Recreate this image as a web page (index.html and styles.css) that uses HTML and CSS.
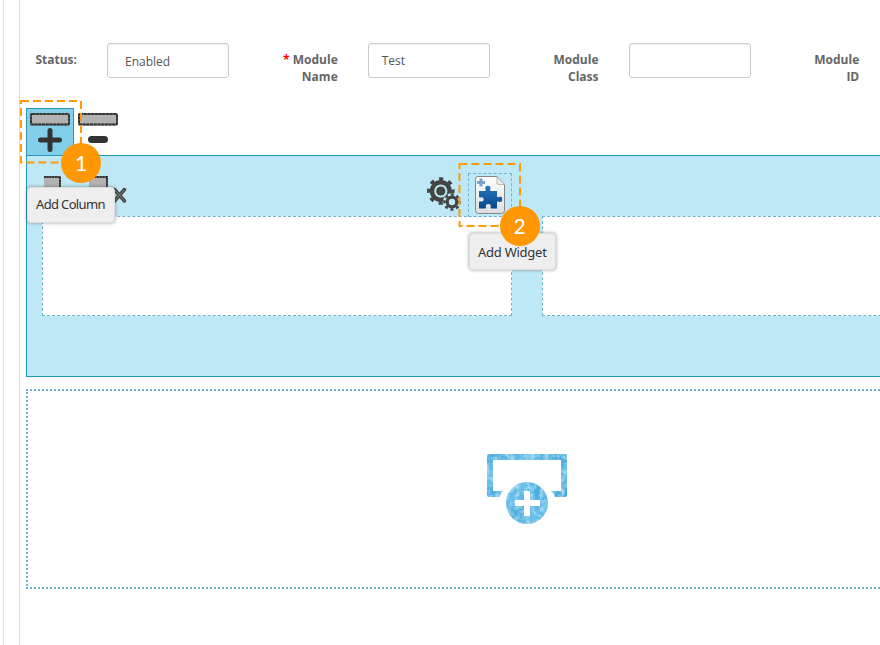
FILE: index.html
```html
<!DOCTYPE html>
<html lang="en">
<head>
<meta charset="utf-8">
<title>Module Builder</title>
<link rel="stylesheet" href="styles.css">
</head>
<body>
<div class="page">
  <div class="frame">
  <main class="panel">
    <form class="fields">
      <div class="field"><label>Status:</label><div class="input select">Enabled</div></div>
      <div class="field"><label><span class="req">*</span> Module Name</label><div class="input">Test</div></div>
      <div class="field"><label>Module Class</label><div class="input"></div></div>
      <div class="field"><label>Module ID</label></div>
    </form>

    <div class="toolbar">
      <div class="tool active">
        <svg width="46" height="46" viewBox="27 109 46 46"><rect x="31" y="114" width="38" height="10.5" rx="1" fill="#b2b2b2" stroke="#777" stroke-width="2"/><rect x="31" y="114" width="38" height="10.5" rx="1" fill="none" stroke="#333" stroke-width="2" stroke-dasharray="3 .7"/><path d="M50 130.500v19M40.500 140h19" stroke="#333" stroke-width="5" stroke-linecap="round"/></svg>
      </div>
      <div class="tool">
        <svg width="46" height="46" viewBox="75 109 46 46"><rect x="79" y="114" width="38" height="10.5" rx="1" fill="#b2b2b2" stroke="#777" stroke-width="2"/><rect x="79" y="114" width="38" height="10.5" rx="1" fill="none" stroke="#333" stroke-width="2" stroke-dasharray="3 .7"/><path d="M91.500 139.500h13" stroke="#333" stroke-width="7" stroke-linecap="round"/></svg>
      </div>
    </div>

    <section class="row">
      <div class="column">
        <header>
          <svg class="sizes" width="88" height="44" viewBox="42 172 88 44"><path d="M44 177h16v18H44zM89 177h18v18H89z" fill="#b2b2b2"/><path d="M44 177h16v18M89 177h18v18" fill="none" stroke="#777" stroke-width="2"/><path d="M44 177h16v18M89 177h18v18" fill="none" stroke="#333" stroke-width="2" stroke-dasharray="2 .7"/><path d="M114.500 189.500l10 11.500M124.500 189.500l-10 11.500" stroke="#444" stroke-width="3.500" stroke-linecap="round"/><path d="M114.500 189.500l10 11.500M124.500 189.500l-10 11.500" stroke="#888" stroke-width="1"/></svg>
          <svg class="gears" width="36" height="36" viewBox="426 176 36 36">
            <circle cx="440.800" cy="191" r="8.800" fill="none" stroke="#444" stroke-width="4.400"/>
            <circle cx="440.800" cy="191" r="12.200" fill="none" stroke="#444" stroke-width="3.200" stroke-dasharray="4.200 5.382" stroke-dashoffset="2.100"/>
            <circle cx="440.800" cy="191" r="4.600" fill="#444"/>
            <circle cx="452" cy="202" r="9" fill="#bee8f5"/>
            <circle cx="452" cy="202" r="4.800" fill="none" stroke="#444" stroke-width="3.200"/>
            <circle cx="452" cy="202" r="7.500" fill="none" stroke="#444" stroke-width="2.600" stroke-dasharray="3 2.890" stroke-dashoffset="1.500"/>
          </svg>
          <div class="add-widget">
            <svg width="42" height="42" viewBox="469 174 42 42">
              <defs><linearGradient id="sheet" x2="0" y2="1"><stop stop-color="#fff"/><stop offset="1" stop-color="#dedede"/></linearGradient><linearGradient id="puzzle" x2="0" y2="1"><stop stop-color="#2479bb"/><stop offset="1" stop-color="#07478c"/></linearGradient></defs>
              <path d="M478 176.500h19l7.500 8v26q0 3-3 3h-23q-3 0-3-3v-31q0-3 2.500-3z" fill="url(#sheet)" stroke="#858585"/>
              <path d="M497 176.500q0 7 0 7.500 3 1 7.500.500z" fill="#ececec" stroke="#aaa" stroke-width=".8"/>
              <path d="M481 178.500v8M477 182.500h8" stroke="#7ba1d0" stroke-width="3"/>
              <path d="M479 191h6.200q1-.700.300-1.700-1-3.500 2.400-3.500t2.300 3.500q-.600 1 .4 1.700h6.400v5.500q.700 1.200 1.800.500 3-1.500 3.400 2 .1 3.700-3.200 2.700-1.200-1-2 .3v6.500h-6q-.800-.700-.3-1.600.600-3-2.300-3t-2.500 2.800q.500 1-.5 1.800H479v-6.500q.600-1 1.700-.600 3 .700 3-2t-3-2q-1.200.500-1.700-.6z" fill="url(#puzzle)"/>
            </svg>
          </div>
        </header>
        <div class="drop"></div>
      </div>
      <div class="column">
        <header></header>
        <div class="drop"></div>
      </div>
    </section>

    <section class="add-row">
      <svg width="82" height="72" viewBox="486 453 82 72">
        <defs>
          <linearGradient id="wash" x2="1" y2="1"><stop stop-color="#45abdf"/><stop offset=".3" stop-color="#66bee8"/><stop offset=".5" stop-color="#48ace0"/><stop offset=".75" stop-color="#66bee8"/><stop offset="1" stop-color="#369dd6"/></linearGradient>
          <filter id="grain" x="0" y="0" width="1" height="1" color-interpolation-filters="sRGB"><feTurbulence type="fractalNoise" baseFrequency=".2" numOctaves="3" seed="4"/><feColorMatrix values="0 0 0 0 1  0 0 0 0 1  0 0 0 0 1  1.300 0 0 0 -.500"/><feComposite in2="SourceGraphic" operator="in"/><feMerge><feMergeNode in="SourceGraphic"/><feMergeNode/></feMerge></filter>
        </defs>
        <g filter="url(#grain)">
          <path fill-rule="evenodd" d="M489 454h76q2 0 2 2v39q0 2-2 2h-10q-1-4-4-6h10v-31h-68v31h9.500q-2.500 3-3 6H489q-2 0-2-2v-39q0-2 2-2z" fill="url(#wash)"/>
          <path fill-rule="evenodd" d="M527 482a21 21 0 1 1 0 42 21 21 0 0 1 0-42zM524 491v9h-9v6h9v10h6v-10h10v-6h-10v-9z" fill="url(#wash)"/>
        </g>
      </svg>
    </section>
  </main>
  </div>

  <div class="tip tip-column">Add Column</div>
  <div class="tip tip-widget">Add Widget</div>
  <svg class="mark mark-one" width="64" height="65"><rect x="2" y="2" width="60" height="61.500"/></svg>
  <svg class="mark mark-two" width="64" height="66"><rect x="1.500" y="2" width="60.500" height="62"/></svg>
  <div class="step step-one">1</div>
  <div class="step step-two">2</div>
</div>
</body>
</html>
```
FILE: styles.css
```css
* { box-sizing: border-box; }
body { margin: 0; background: #fff; font: 12px/17px "Open Sans", sans-serif; color: #666; }
svg { display: block; }
.page { position: relative; width: 880px; height: 645px; padding-left: 3px; overflow: hidden; }
.frame { height: 645px; border-left: 1px solid #e6e6e6; padding-left: 15px; }
.panel { height: 645px; border-left: 1px solid #d9d9d9; }
.fields { display: grid; grid-template-columns: repeat(4, 260.750px); padding-top: 43px; height: 108px; }
.field { display: flex; gap: 30px; }
.field label { width: 57px; padding-top: 8px; text-align: right; font-weight: 700; flex: none; }
.req { color: #f00; }
.input { width: 122px; height: 35px; border: 1px solid #ccc; border-radius: 3px; padding: 8px 13px; color: #555; box-shadow: inset 0 1px 1px rgba(0,0,0,.075); }
.select { padding: 9px 17px; }
.toolbar { display: flex; height: 47px; margin-left: 6px; }
.tool { width: 48px; height: 47px; border: 1px solid transparent; border-bottom: 0; }
.active { background: #82cfea; border-color: #3293b3; }
.row { display: flex; gap: 30px; height: 222px; margin-left: 6px; padding-left: 15px; background: #bee8f5; border: 1px solid #2498b9; border-right: 0; overflow: hidden; }
.column { width: 470px; flex: none; }
.column header { display: flex; height: 60px; padding-top: 17px; }
.sizes { margin-top: -1px; }
.gears { margin: 3px 6px 0 296px; flex: none; }
.add-widget { width: 44px; height: 44px; border: 1px dashed #6cb4d0; flex: none; }
.drop { height: 100px; background: #fff; border: 1px dashed #6cb4d0; }
.add-row { display: flex; justify-content: center; width: 1002px; height: 200px; margin: 12px 0 0 6px; padding-top: 62px; border: 2px dotted #6cb4d0; }
.tip { position: absolute; padding: 8px 9px; height: 37px; border: 1px solid #ddd; border-radius: 4px; background: #eee; box-shadow: 0 0 3px 1px rgba(0,0,0,.22); color: #333; font: 13px/19px "Noto Sans", sans-serif; white-space: nowrap; }
.tip-column { left: 27px; top: 187px; width: 88px; height: 36px; padding: 7px 8px; letter-spacing: -.65px; }
.tip-widget { left: 469px; top: 233px; width: 87px; padding: 9px 8px; letter-spacing: -.25px; }
.mark { position: absolute; fill: none; stroke: #ff9a08; stroke-width: 2; stroke-dasharray: 8 4; }
.mark-one { left: 19px; top: 99px; }
.mark-two { left: 458px; top: 162px; }
.step { position: absolute; width: 40px; height: 40px; border-radius: 50%; background: #ff9804; color: #fff; text-align: center; font: 21px/40px Lato, sans-serif; }
.step-one { left: 61px; top: 143px; }
.step-two { left: 499.500px; top: 206px; }
```
